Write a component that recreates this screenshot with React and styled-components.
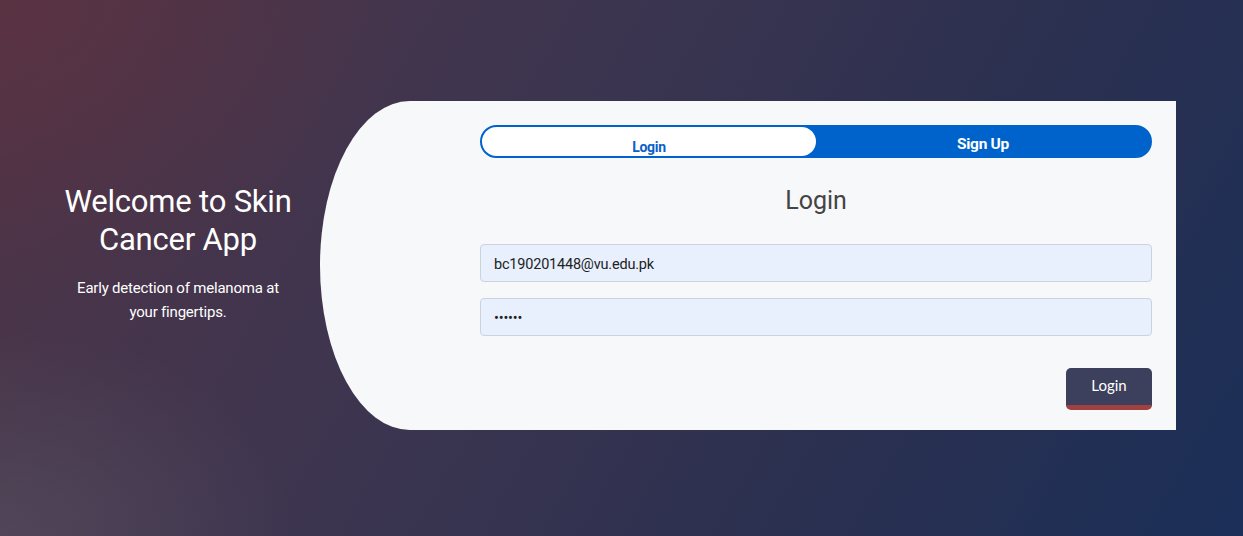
import { useState } from "react";
import styled, { createGlobalStyle } from "styled-components";

const GlobalStyle = createGlobalStyle`
  body {
    margin: 0;
    font-family: Roboto, "Liberation Sans", sans-serif;
  }
  * { box-sizing: border-box; }
`;

const App = () => {
  const [tab, setTab] = useState("login");

  return (
    <Page>
      <GlobalStyle />
      <Intro>
        <Welcome>Welcome to Skin Cancer App</Welcome>
        <Tagline>Early detection of melanoma at your fingertips.</Tagline>
      </Intro>

      <Card>
        <Toggle>
          <ToggleTab active={tab === "login"} onClick={() => setTab("login")}>
            Login
          </ToggleTab>
          <ToggleTab active={tab === "signup"} onClick={() => setTab("signup")}>
            Sign Up
          </ToggleTab>
        </Toggle>

        <Title>Login</Title>

        <Form onSubmit={(e) => e.preventDefault()}>
          <Input type="email" defaultValue="bc190201448@vu.edu.pk" />
          <Input type="password" defaultValue="123456" />
          <Actions>
            <Submit type="submit">Login</Submit>
          </Actions>
        </Form>
      </Card>
    </Page>
  );
};

export default App;

const Page = styled.div`
  min-height: 100vh;
  display: flex;
  align-items: center;
  padding-bottom: 6px;
  background:
    radial-gradient(ellipse 420px 300px at 0% 100%, rgba(90, 85, 100, 0.55), transparent 70%),
    radial-gradient(ellipse 500px 380px at 0% 0%, rgba(95, 50, 65, 0.7), transparent 80%),
    linear-gradient(120deg, #4f3446 0%, #3c3550 40%, #2b3050 70%, #1b2f58 100%);
`;

const Intro = styled.div`
  width: 320px;
  padding-left: 36px;
  padding-bottom: 24px;
  display: flex;
  flex-direction: column;
  align-items: center;
  text-align: center;
  color: #fff;
`;

const Welcome = styled.h1`
  width: 270px;
  margin: 0 0 17px;
  font-size: 31px;
  line-height: 38px;
  font-weight: 400;
  letter-spacing: -0.2px;
`;

const Tagline = styled.p`
  width: 228px;
  margin: 0;
  font-size: 15px;
  line-height: 24px;
  letter-spacing: -0.2px;
`;

const Card = styled.div`
  width: 856px;
  height: 329px;
  background: #f7f8fa;
  border-radius: 90px 0 0 90px / 165px 0 0 165px;
  padding: 24px 24px 20px 160px;
  display: flex;
  flex-direction: column;
`;

const Toggle = styled.div`
  display: flex;
  height: 33px;
  background: #0063cc;
  border-radius: 17px;
  border: 2px solid #0063cc;
`;

const ToggleTab = styled.button`
  flex: 1;
  border: none;
  border-radius: 15px;
  padding: ${(p) => (p.active ? "12px" : "8px")} 0 0;
  line-height: 1;
  background: ${(p) => (p.active ? "#fff" : "transparent")};
  color: ${(p) => (p.active ? "#0b5fc8" : "#fff")};
  font-family: Roboto, "Liberation Sans", sans-serif;
  font-weight: 700;
  font-size: ${(p) => (p.active ? "14px" : "15.5px")};
  letter-spacing: -0.3px;
  cursor: pointer;
`;

const Title = styled.h2`
  margin: 28px 0 28px;
  text-align: center;
  font-size: 25px;
  line-height: 30px;
  font-weight: 400;
  color: #444;
`;

const Form = styled.form`
  display: flex;
  flex-direction: column;
  gap: 16px;
`;

const Input = styled.input`
  height: 38px;
  padding: 3px 13px 0;
  background: #e8f0fe;
  border: 1px solid #ccd3dd;
  border-radius: 4px;
  font-family: Roboto, "Liberation Sans", sans-serif;
  font-size: 14.5px;
  letter-spacing: -0.2px;
  color: #222;
  outline: none;
`;

const Actions = styled.div`
  display: flex;
  justify-content: flex-end;
  margin-top: 16px;
`;

const Submit = styled.button`
  width: 86px;
  height: 42px;
  border: none;
  border-bottom: 5px solid #a0403f;
  border-radius: 5px;
  background: #3c405c;
  color: #fff;
  font-family: Lato, "Open Sans", sans-serif;
  font-size: 15px;
  padding: 0 0 2px;
  cursor: pointer;
`;
